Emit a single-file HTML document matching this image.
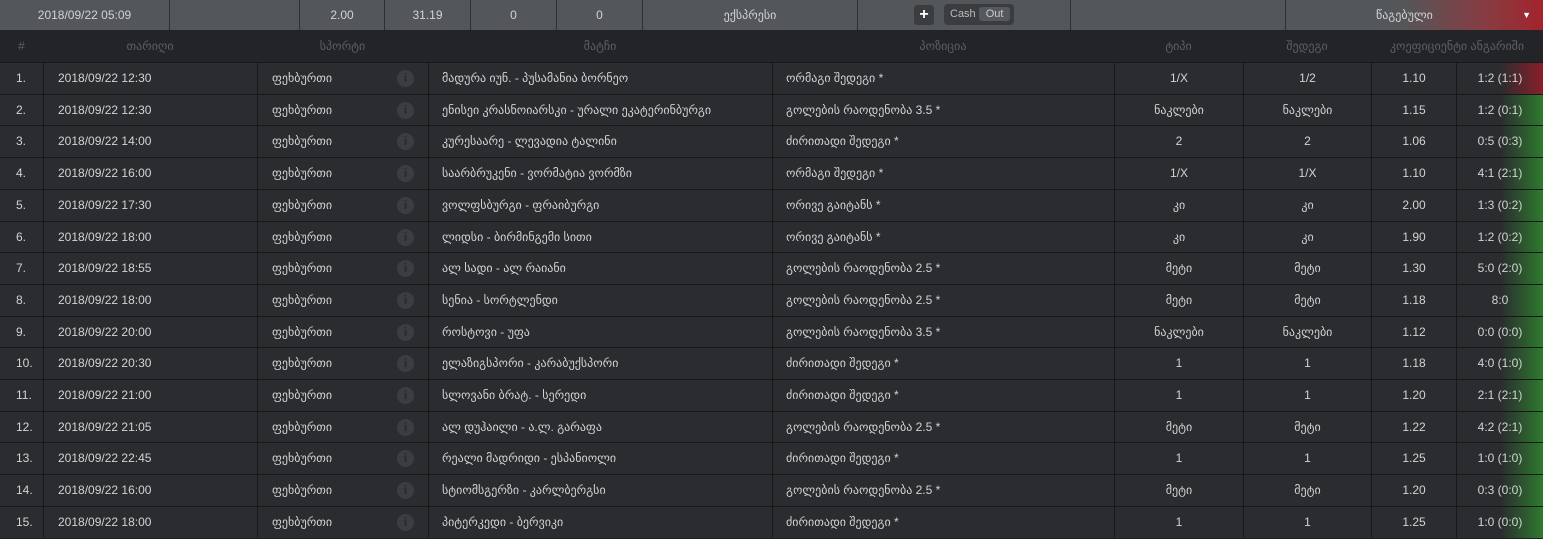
<!DOCTYPE html>
<html><head><meta charset="utf-8">
<style>
*{margin:0;padding:0;box-sizing:border-box}
body{width:1543px;height:539px;background:#1e2022;font-family:"Liberation Sans","DejaVu Sans",sans-serif;font-size:12px;color:#d2d3d4;overflow:hidden;position:relative}
.top{position:absolute;left:0;top:0;width:1543px;height:30px;background:#53575a}
.top div{position:absolute;top:0;height:30px;line-height:30px;text-align:center;border-right:1px solid #2e3133}
.top .g{background:linear-gradient(90deg,#53575a 0%,#53575a 45%,#8a3a40 80%,#a3232c 100%);border-right:none}
.hdr{position:absolute;left:0;top:30px;width:1543px;height:32px;background:#222427;color:#5d6063;line-height:32px}
.hdr span{position:absolute;top:0;text-align:center}
.row{position:absolute;left:0;width:1543px;height:32px;background:#2a2c2f;border-top:1px solid #17181a}
.row div{position:absolute;top:0;height:31px;line-height:31px;border-left:1px solid #17181a;white-space:nowrap}
.c0{left:0;width:43px;padding-left:16px;border-left:none!important}
.c1{left:43px;width:214px;padding-left:14px}
.c2{left:257px;width:171px;padding-left:14px}
.c3{left:428px;width:344px;padding-left:13px}
.c4{left:772px;width:342px;padding-left:13px}
.c5{left:1114px;width:129px;text-align:center}
.c6{left:1243px;width:128px;text-align:center}
.c7{left:1371px;width:85px;text-align:center}
.c8{left:1456px;width:87px;text-align:center;background:linear-gradient(90deg,#2a2c2f 0%,#2a2c2f 50%,#2e7a2e 100%)}
.r .c8{background:linear-gradient(90deg,#2a2c2f 0%,#2a2c2f 50%,#8a1f28 100%)}
.i{position:absolute;left:139px;top:7px;width:17px;height:17px;border-radius:50%;background:#3b3d40;color:#26282a;font-weight:bold;font-size:12px;line-height:17px;text-align:center}
</style></head><body>
<div class="top">
<div style="left:0;width:170px">2018/09/22 05:09</div>
<div style="left:170px;width:130px"></div>
<div style="left:300px;width:85px">2.00</div>
<div style="left:385px;width:86px">31.19</div>
<div style="left:471px;width:86px">0</div>
<div style="left:557px;width:86px">0</div>
<div style="left:643px;width:215px">ექსპრესი</div>
<div style="left:858px;width:213px"><span style="position:absolute;left:56px;top:5px;width:20px;height:20px;background:#3a3d40;border-radius:3px;color:#fff;font-weight:bold;font-size:16px;line-height:20px">+</span><span style="position:absolute;left:86px;top:4px;width:70px;height:21px;background:#3a3d40;border-radius:4px;line-height:21px;text-align:left;padding-left:6px;color:#bbb;font-size:11px">Cash <span style="background:#55585c;border-radius:3px;padding:1px 7px;color:#ccc">Out</span></span></div>
<div style="left:1071px;width:215px"></div>
<div class="g" style="left:1286px;width:257px;padding-right:40px;text-align:right"><span style="position:absolute;left:90px">წაგებული</span><span style="position:absolute;right:12px;top:0;font-size:9px;color:#fff">▼</span></div>
</div>
<div class="hdr">
<span style="left:0;width:43px">#</span>
<span style="left:43px;width:214px">თარიღი</span>
<span style="left:257px;width:171px">სპორტი</span>
<span style="left:428px;width:344px">მატჩი</span>
<span style="left:772px;width:342px">პოზიცია</span>
<span style="left:1114px;width:129px">ტიპი</span>
<span style="left:1243px;width:128px">შედეგი</span>
<span style="left:1371px;width:172px">კოეფიციენტი ანგარიში</span>
</div>

<div class="row r" style="top:62px"><div class="c0">1.</div><div class="c1">2018/09/22 12:30</div><div class="c2">ფეხბურთი<span class="i">i</span></div><div class="c3">მადურა იუნ. - პუსამანია ბორნეო</div><div class="c4">ორმაგი შედეგი *</div><div class="c5">1/X</div><div class="c6">1/2</div><div class="c7">1.10</div><div class="c8">1:2 (1:1)</div></div>
<div class="row" style="top:93.7px"><div class="c0">2.</div><div class="c1">2018/09/22 12:30</div><div class="c2">ფეხბურთი<span class="i">i</span></div><div class="c3">ენისეი კრასნოიარსკი - ურალი ეკატერინბურგი</div><div class="c4">გოლების რაოდენობა 3.5 *</div><div class="c5">ნაკლები</div><div class="c6">ნაკლები</div><div class="c7">1.15</div><div class="c8">1:2 (0:1)</div></div>
<div class="row" style="top:125.4px"><div class="c0">3.</div><div class="c1">2018/09/22 14:00</div><div class="c2">ფეხბურთი<span class="i">i</span></div><div class="c3">კურესაარე - ლევადია ტალინი</div><div class="c4">ძირითადი შედეგი *</div><div class="c5">2</div><div class="c6">2</div><div class="c7">1.06</div><div class="c8">0:5 (0:3)</div></div>
<div class="row" style="top:157.1px"><div class="c0">4.</div><div class="c1">2018/09/22 16:00</div><div class="c2">ფეხბურთი<span class="i">i</span></div><div class="c3">საარბრუკენი - ვორმატია ვორმზი</div><div class="c4">ორმაგი შედეგი *</div><div class="c5">1/X</div><div class="c6">1/X</div><div class="c7">1.10</div><div class="c8">4:1 (2:1)</div></div>
<div class="row" style="top:188.8px"><div class="c0">5.</div><div class="c1">2018/09/22 17:30</div><div class="c2">ფეხბურთი<span class="i">i</span></div><div class="c3">ვოლფსბურგი - ფრაიბურგი</div><div class="c4">ორივე გაიტანს *</div><div class="c5">კი</div><div class="c6">კი</div><div class="c7">2.00</div><div class="c8">1:3 (0:2)</div></div>
<div class="row" style="top:220.5px"><div class="c0">6.</div><div class="c1">2018/09/22 18:00</div><div class="c2">ფეხბურთი<span class="i">i</span></div><div class="c3">ლიდსი - ბირმინგემი სითი</div><div class="c4">ორივე გაიტანს *</div><div class="c5">კი</div><div class="c6">კი</div><div class="c7">1.90</div><div class="c8">1:2 (0:2)</div></div>
<div class="row" style="top:252.2px"><div class="c0">7.</div><div class="c1">2018/09/22 18:55</div><div class="c2">ფეხბურთი<span class="i">i</span></div><div class="c3">ალ სადი - ალ რაიანი</div><div class="c4">გოლების რაოდენობა 2.5 *</div><div class="c5">მეტი</div><div class="c6">მეტი</div><div class="c7">1.30</div><div class="c8">5:0 (2:0)</div></div>
<div class="row" style="top:283.9px"><div class="c0">8.</div><div class="c1">2018/09/22 18:00</div><div class="c2">ფეხბურთი<span class="i">i</span></div><div class="c3">სენია - სორტლენდი</div><div class="c4">გოლების რაოდენობა 2.5 *</div><div class="c5">მეტი</div><div class="c6">მეტი</div><div class="c7">1.18</div><div class="c8">8:0</div></div>
<div class="row" style="top:315.6px"><div class="c0">9.</div><div class="c1">2018/09/22 20:00</div><div class="c2">ფეხბურთი<span class="i">i</span></div><div class="c3">როსტოვი - უფა</div><div class="c4">გოლების რაოდენობა 3.5 *</div><div class="c5">ნაკლები</div><div class="c6">ნაკლები</div><div class="c7">1.12</div><div class="c8">0:0 (0:0)</div></div>
<div class="row" style="top:347.3px"><div class="c0">10.</div><div class="c1">2018/09/22 20:30</div><div class="c2">ფეხბურთი<span class="i">i</span></div><div class="c3">ელაზიგსპორი - კარაბუქსპორი</div><div class="c4">ძირითადი შედეგი *</div><div class="c5">1</div><div class="c6">1</div><div class="c7">1.18</div><div class="c8">4:0 (1:0)</div></div>
<div class="row" style="top:379px"><div class="c0">11.</div><div class="c1">2018/09/22 21:00</div><div class="c2">ფეხბურთი<span class="i">i</span></div><div class="c3">სლოვანი ბრატ. - სერედი</div><div class="c4">ძირითადი შედეგი *</div><div class="c5">1</div><div class="c6">1</div><div class="c7">1.20</div><div class="c8">2:1 (2:1)</div></div>
<div class="row" style="top:410.7px"><div class="c0">12.</div><div class="c1">2018/09/22 21:05</div><div class="c2">ფეხბურთი<span class="i">i</span></div><div class="c3">ალ დუჰაილი - ა.ლ. გარაფა</div><div class="c4">გოლების რაოდენობა 2.5 *</div><div class="c5">მეტი</div><div class="c6">მეტი</div><div class="c7">1.22</div><div class="c8">4:2 (2:1)</div></div>
<div class="row" style="top:442.4px"><div class="c0">13.</div><div class="c1">2018/09/22 22:45</div><div class="c2">ფეხბურთი<span class="i">i</span></div><div class="c3">რეალი მადრიდი - ესპანიოლი</div><div class="c4">ძირითადი შედეგი *</div><div class="c5">1</div><div class="c6">1</div><div class="c7">1.25</div><div class="c8">1:0 (1:0)</div></div>
<div class="row" style="top:474.1px"><div class="c0">14.</div><div class="c1">2018/09/22 16:00</div><div class="c2">ფეხბურთი<span class="i">i</span></div><div class="c3">სტიომსგერზი - კარლბერგსი</div><div class="c4">გოლების რაოდენობა 2.5 *</div><div class="c5">მეტი</div><div class="c6">მეტი</div><div class="c7">1.20</div><div class="c8">0:3 (0:0)</div></div>
<div class="row" style="top:505.8px"><div class="c0">15.</div><div class="c1">2018/09/22 18:00</div><div class="c2">ფეხბურთი<span class="i">i</span></div><div class="c3">პიტერკედი - ბერვიკი</div><div class="c4">ძირითადი შედეგი *</div><div class="c5">1</div><div class="c6">1</div><div class="c7">1.25</div><div class="c8">1:0 (0:0)</div></div>
</body></html>
